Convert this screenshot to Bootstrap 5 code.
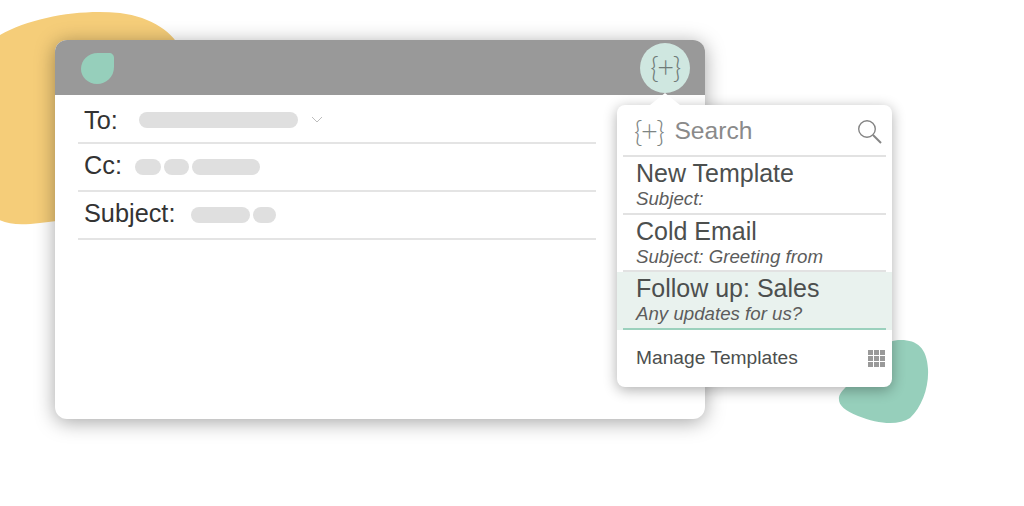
<!DOCTYPE html>
<html lang="en">
<head>
  <meta charset="UTF-8" />
  <title>Templates</title>
  <link href="https://cdn.jsdelivr.net/npm/bootstrap@5.3.0/dist/css/bootstrap.min.css" rel="stylesheet">
  <style>
    body {
      background-color: #fff;
      font-family: "Liberation Sans", Arial, sans-serif;
      width: 1024px;
      height: 506px;
      overflow: hidden;
    }
    .stage { width: 1024px; height: 506px; padding: 40px 319px 0 55px; }
    .blob-yellow { position: absolute; left: -30px; top: 11px; width: 212px; height: 214px; }
    .blob-green { position: absolute; left: 838px; top: 339px; width: 91px; height: 85px; }

    .mail-window {
      position: relative;
      height: 379px;
      border-radius: 12px;
      background-color: #fff;
      box-shadow: 0 3px 20px rgba(0,0,0,0.36);
      overflow: hidden;
    }
    .mail-head { height: 55px; background-color: #999; padding: 13px 26px; }
    .mail-body { width: 541px; padding: 1px 0 0 23px; }
    .mail-row {
      height: 48px;
      border-bottom: 2px solid #e4e4e4;
      color: #333;
      font-size: 25.3px;
      padding: 0 0 0 6px;
    }
    .label-to { width: 55px; margin-top: 4px; }
    .label-cc { width: 51px; margin-top: -3px; }
    .label-subject { width: 107px; margin-top: -3px; }
    .pill { height: 16px; border-radius: 8px; background-color: #dfdfdf; display: block; }
    .pill-to { width: 159px; margin-top: 1px; }
    .mail-row .d-flex { gap: 3px; }

    .tpl-button {
      position: absolute;
      left: 640px; top: 43px;
      width: 50px; height: 50px;
      border-radius: 50%;
      background-color: #cfe7e0;
      color: #6f7b78;
      font-family: Lato, sans-serif;
      font-size: 29px;
      font-weight: 300;
      letter-spacing: -1.5px;
      padding-bottom: 3px;
    }
    .tpl-arrow {
      position: absolute;
      left: 650px; top: 93px;
      width: 0; height: 0;
      border-left: 15px solid transparent;
      border-right: 15px solid transparent;
      border-bottom: 12px solid #fff;
    }
    .tpl-menu {
      position: absolute;
      left: 617px; top: 105px;
      width: 275px; height: 282px;
      border-radius: 8px;
      background-color: #fff;
      box-shadow: 0 3px 14px rgba(0,0,0,0.32);
      overflow: hidden;
    }
    .tpl-search {
      height: 52px;
      margin: 0 6px;
      border-bottom: 2px solid #e2e2e2;
      color: #8a8a8a;
      font-size: 24.6px;
      padding: 2px 4px 0 11px;
    }
    .tpl-search .braces { color: #7d8483; font-family: Lato, sans-serif; font-weight: 300; font-size: 29px; letter-spacing: -1.5px; margin-right: 11px; }
    .tpl-item { height: 57.5px; padding: 0 6px; color: #4c4f4e; }
    .tpl-inner { height: 57.5px; border-bottom: 2px solid #e2e2e2; padding: 1px 0 0 13px; }
    .tpl-name { font-size: 25px; line-height: 30px; }
    .tpl-sub { font-size: 18.7px; line-height: 22px; font-style: italic; color: #5c5c5c; }
    .tpl-item.active-item { background-color: #e9f2ee; }
    .active-item .tpl-inner { border-bottom-color: #9bd1bd; }
    .tpl-foot { height: 57px; padding: 0 7px 0 19px; color: #4c4f4e; font-size: 19.2px; }
    .grid-icon { display: grid; grid-template-columns: repeat(3, 5px); gap: 1px; }
    .grid-icon i { display: block; height: 5px; background-color: #999; }
    .chevron-to { margin-left: 13px; }
  </style>
</head>
<body>
<div class="stage position-relative">
  <svg class="blob-yellow" viewBox="0 0 212 214"><path fill="#f5cd79" d="M30 24C62 6 110 -2 150 2C182 6 204 22 212 40L212 190C170 198 120 206 70 212C40 216 22 212 12 190C0 150 -4 60 30 24Z"/></svg>
  <svg class="blob-green" viewBox="0 0 91 85"><path fill="#96cfbb" d="M60 1C78 0 89 8 90 30C91 48 84 68 72 79C60 87 40 85 20 77C6 71 0 66 1 58C3 50 20 38 30 24C40 10 48 2 60 1Z"/></svg>

  <div class="mail-window">
    <div class="mail-head">
      <svg width="33" height="31" viewBox="0 0 33 31" class="d-block"><path fill="#96cfbb" d="M17 0L28 0C31 0 33 2 33 5L33 14C33 24 25 31 16 31C7 31 0 24 0 16C0 7 7 0 17 0Z"/></svg>
    </div>
    <div class="mail-body">
      <div class="mail-row d-flex align-items-center">
        <span class="label-to">To:</span>
        <span class="pill pill-to"></span>
        <svg class="chevron-to" width="12" height="7" viewBox="0 0 12 7"><path fill="none" stroke="#bdbdbd" stroke-width="1" d="M1 1L6 6L11 1"/></svg>
      </div>
      <div class="mail-row d-flex align-items-center">
        <span class="label-cc">Cc:</span>
        <div class="d-flex">
          <span class="pill" style="width:26px"></span>
          <span class="pill" style="width:25px"></span>
          <span class="pill" style="width:68px"></span>
        </div>
      </div>
      <div class="mail-row d-flex align-items-center">
        <span class="label-subject">Subject:</span>
        <div class="d-flex">
          <span class="pill" style="width:59px"></span>
          <span class="pill" style="width:23px"></span>
        </div>
      </div>
    </div>
  </div>

  <div class="tpl-menu">
    <div class="tpl-search d-flex align-items-center">
      <span class="braces">{+}</span>
      <span class="flex-grow-1">Search</span>
      <svg width="25" height="25" viewBox="0 0 25 25"><circle cx="10" cy="10" r="8.3" fill="none" stroke="#858585" stroke-width="1.4"/><path d="M16 16L24 24" stroke="#858585" stroke-width="2"/></svg>
    </div>
    <div class="tpl-item"><div class="tpl-inner">
      <div class="tpl-name">New Template</div>
      <div class="tpl-sub">Subject:</div>
    </div></div>
    <div class="tpl-item"><div class="tpl-inner">
      <div class="tpl-name">Cold Email</div>
      <div class="tpl-sub">Subject: Greeting from</div>
    </div></div>
    <div class="tpl-item active-item"><div class="tpl-inner">
      <div class="tpl-name">Follow up: Sales</div>
      <div class="tpl-sub">Any updates for us?</div>
    </div></div>
    <div class="tpl-foot d-flex align-items-center justify-content-between">
      <span>Manage Templates</span>
      <div class="grid-icon"><i></i><i></i><i></i><i></i><i></i><i></i><i></i><i></i><i></i></div>
    </div>
  </div>

  <div class="tpl-arrow"></div>
  <div class="tpl-button d-flex align-items-center justify-content-center">{+}</div>
</div>
</body>
</html>
